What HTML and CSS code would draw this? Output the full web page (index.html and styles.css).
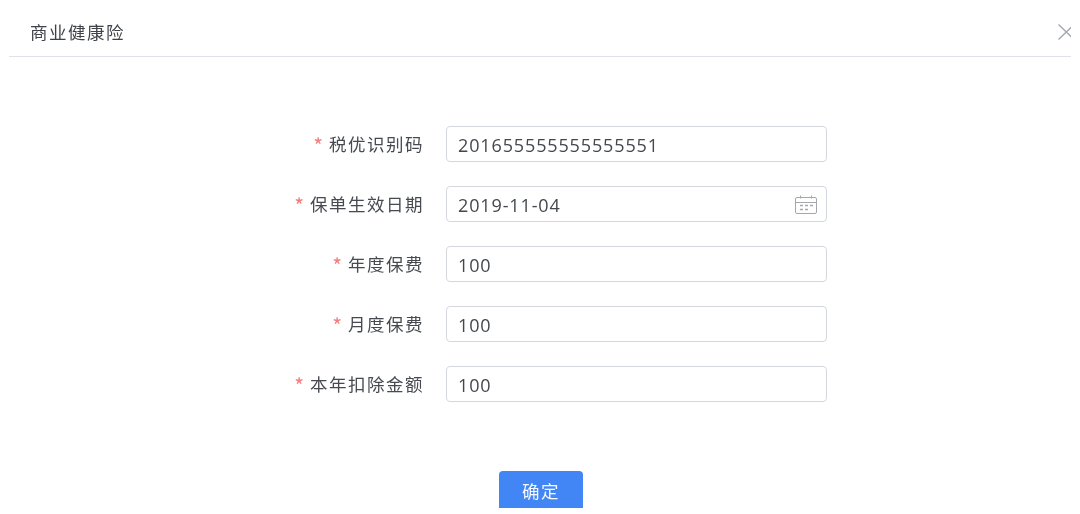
FILE: index.html
```html
<!DOCTYPE html>
<html lang="zh-CN">
<head>
<meta charset="utf-8">
<title>商业健康险</title>
<link rel="stylesheet" href="styles.css">
</head>
<body>
<div class="dialog">
  <header class="dialog-header">
    <h1 class="dialog-title">商业健康险</h1>
    <button class="dialog-close" type="button" aria-label="关闭">
      <svg width="13" height="16" viewBox="0 0 13 16"><path d="M.5 .5 16 15.5M16 .5 .5 15.5" fill="none" stroke="#a4a8b0" stroke-width="1.4"/></svg>
    </button>
  </header>
  <form class="form">
    <div class="row">
      <label class="label"><span class="req">*</span>税优识别码</label>
      <div class="field">201655555555555551</div>
    </div>
    <div class="row">
      <label class="label"><span class="req">*</span>保单生效日期</label>
      <div class="field">2019-11-04
        <svg class="cal" width="24" height="20" viewBox="0 0 24 20" fill="none" stroke="#a3a8b0" stroke-width="1">
          <rect x="1.5" y="2.5" width="21" height="16" rx="1.5"/>
          <path d="M1.5 7.5h21M6.5 .5v3M17.5 .5v3"/>
          <path d="M6 10.5h3M11 10.5h3M16 10.5h3M6 14.5h3M11 14.5h3" stroke-width="1.6"/>
        </svg>
      </div>
    </div>
    <div class="row">
      <label class="label"><span class="req">*</span>年度保费</label>
      <div class="field">100</div>
    </div>
    <div class="row">
      <label class="label"><span class="req">*</span>月度保费</label>
      <div class="field">100</div>
    </div>
    <div class="row">
      <label class="label"><span class="req">*</span>本年扣除金额</label>
      <div class="field">100</div>
    </div>
    <div class="actions">
      <button class="confirm" type="button">确定</button>
    </div>
  </form>
</div>
</body>
</html>
```
FILE: styles.css
```css
html, body {
  margin: 0;
  background: #fff;
}
body {
  font-family: "Noto Sans CJK SC", "Open Sans", sans-serif;
  color: #5f6368;
}
.dialog {
  width: 1080px;
  height: 508px;
  box-sizing: border-box;
  padding: 0 9px;
  overflow: hidden;
  filter: blur(.45px);
}
.dialog-header {
  height: 57px;
  box-sizing: border-box;
  border-bottom: 1px solid #e0e2e8;
  display: flex;
  align-items: center;
  justify-content: space-between;
  padding: 7px 0 0 21px;
}
.dialog-title {
  margin: 0;
  font-size: 17.5px;
  font-weight: 400;
  letter-spacing: 1.5px;
  color: #3f4349;
}
.dialog-close {
  width: 13px;
  height: 16px;
  padding: 0;
  border: 0;
  background: none;
  display: flex;
}
.form {
  display: flex;
  flex-direction: column;
  gap: 24px;
  padding-top: 69px;
}
.row {
  display: flex;
  align-items: center;
  height: 36px;
}
.label {
  width: 415px;
  text-align: right;
  font-size: 17.5px;
  line-height: 34px;
  letter-spacing: 1.5px;
  margin: 0 22px 1px 0;
  color: #474b51;
  white-space: nowrap;
}
.req {
  color: #f47c7c;
  font-size: 21px;
  line-height: 1;
  vertical-align: -3px;
  margin-right: 6px;
  letter-spacing: 0;
}
.field {
  width: 381px;
  height: 36px;
  box-sizing: border-box;
  border: 1px solid #d5d7de;
  border-radius: 4px;
  padding: 1px 10px 0 11px;
  display: flex;
  align-items: center;
  justify-content: space-between;
  font-family: "Open Sans", sans-serif;
  font-size: 18px;
  letter-spacing: .87px;
  color: #44484d;
}
.cal {
  flex: none;
  margin-right: -2px;
}
.actions {
  display: flex;
  justify-content: center;
  padding-top: 45px;
  padding-left: 2px;
}
.confirm {
  width: 84px;
  height: 44px;
  flex: none;
  border: 0;
  border-radius: 4px 4px 0 0;
  background: #4285f4;
  color: #f4f8ff;
  font-family: "Noto Sans CJK SC", sans-serif;
  font-size: 17.5px;
  letter-spacing: 1.5px;
  padding: 0 0 5px;
}
```
